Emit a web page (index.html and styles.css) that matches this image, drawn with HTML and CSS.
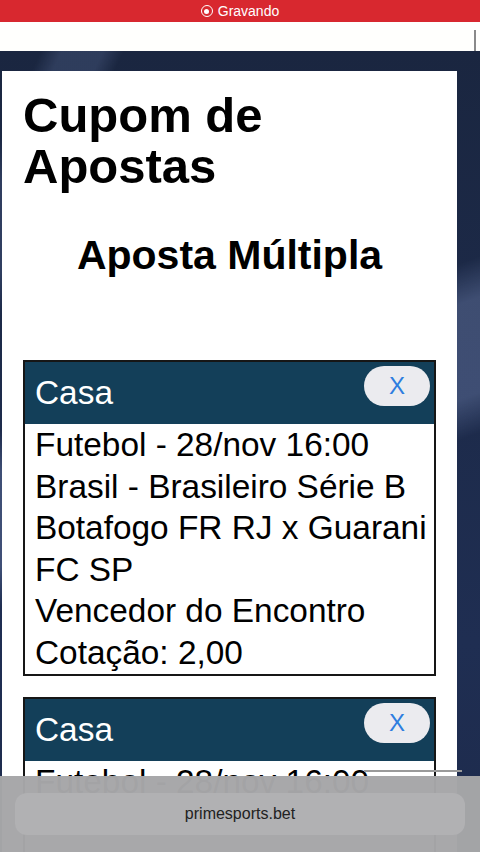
FILE: index.html
```html
<!DOCTYPE html>
<html lang="pt-BR">
<head>
    <meta charset="UTF-8">
    <meta name="viewport" content="width=device-width, initial-scale=1.0">
    <title>Cupom de Apostas</title>
    <link rel="stylesheet" href="styles.css">
</head>
<body>
    <div class="rec-bar">
        <span class="rec-dot"></span>
        <span>Gravando</span>
    </div>

    <div class="top-strip">
        <span class="scroll-thumb"></span>
    </div>

    <div class="stage">
        <div class="coupon">
            <h1>Cupom de Apostas</h1>
            <h2>Aposta Múltipla</h2>

            <div class="bet">
                <div class="bet-head">
                    <span>Casa</span>
                    <button class="bet-remove">X</button>
                </div>
                <div class="bet-body">
                    <div>Futebol - 28/nov 16:00</div>
                    <div>Brasil - Brasileiro Série B</div>
                    <div>Botafogo FR RJ x Guarani FC SP</div>
                    <div>Vencedor do Encontro</div>
                    <div>Cotação: 2,00</div>
                </div>
            </div>

            <div class="bet">
                <div class="bet-head">
                    <span>Casa</span>
                    <button class="bet-remove">X</button>
                </div>
                <div class="bet-body">
                    <div>Futebol - 28/nov 16:00</div>
                    <div>Brasil - Brasileiro Série B</div>
                    <div>Botafogo FR RJ x Guarani FC SP</div>
                    <div>Vencedor do Encontro</div>
                    <div>Cotação: 2,00</div>
                </div>
            </div>
        </div>
    </div>

    <div class="url-bar">
        <span class="url-line"></span>
        <div class="url-pill">primesports.bet</div>
    </div>
</body>
</html>
```

FILE: styles.css
```css
html, body {
    height: 100%;
}

body {
    margin: 0;
    font-family: 'Liberation Sans', Arial, sans-serif;
    color: #000;
    background: #1d2741;
    overflow: hidden;
}

.rec-bar {
    height: 22px;
    background-color: #d8282f;
    color: #fff;
    font-size: 14px;
    display: flex;
    align-items: center;
    justify-content: center;
    gap: 5px;
}

.rec-dot {
    width: 10px;
    height: 10px;
    border: 1.5px solid #fff;
    border-radius: 50%;
    position: relative;
}

.rec-dot::after {
    content: "";
    position: absolute;
    left: 2.5px;
    top: 2.5px;
    width: 5px;
    height: 5px;
    border-radius: 50%;
    background: #fff;
}

.top-strip {
    height: 29px;
    background-color: #fffffd;
    position: relative;
}

.scroll-thumb {
    position: absolute;
    right: 4px;
    top: 8px;
    width: 2px;
    height: 21px;
    background: #8a8a8a;
}

.stage {
    padding: 20px 23px 0 2px;
    background:
        linear-gradient(115deg, transparent 0 4%, rgba(120, 140, 190, 0.22) 6% 10%, transparent 12%),
        linear-gradient(160deg, transparent 0 28%, rgba(140, 160, 210, 0.3) 31% 38%, transparent 41%),
        linear-gradient(180deg, #1a2640 0%, #1f2e52 50%, #1b2643 100%);
}

.coupon {
    background-color: #fff;
    padding: 19px 21px 200px 21px;
}

.coupon h1 {
    margin: 0;
    font-size: 49px;
    line-height: 51px;
    font-weight: bold;
}

.coupon h2 {
    margin: 39px 0 81px 0;
    font-size: 41px;
    line-height: 48px;
    font-weight: bold;
    text-align: center;
}

.bet {
    border: 2px solid #161616;
    margin-bottom: 21px;
    font-size: 33.4px;
}

.bet-head {
    height: 62px;
    background-color: #133f59;
    color: #fff;
    display: flex;
    justify-content: space-between;
    align-items: flex-start;
    padding-left: 10px;
}

.bet-head span {
    line-height: 62px;
}

.bet-remove {
    margin: 4px 4px 0 0;
    width: 66px;
    height: 40px;
    border: none;
    border-radius: 20px;
    background-color: #ebebef;
    color: #2e7ddf;
    font-family: 'Liberation Sans', Arial, sans-serif;
    font-size: 24px;
    padding: 0;
}

.bet-body {
    padding-left: 10px;
    line-height: 41.6px;
}

.url-bar {
    position: fixed;
    left: 0;
    right: 0;
    bottom: 0;
    height: 76px;
    background-color: rgba(166, 166, 168, 0.98);
    display: flex;
    align-items: center;
    justify-content: center;
}

.url-line {
    position: absolute;
    right: 18px;
    top: -6px;
    width: 98px;
    height: 2px;
    background: #9a9a9a;
}

.url-pill {
    width: 450px;
    height: 42px;
    border-radius: 12px;
    background-color: #b1b1b3;
    color: #222;
    font-family: 'Liberation Sans', Arial, sans-serif;
    font-size: 16px;
    display: flex;
    align-items: center;
    justify-content: center;
}
```
